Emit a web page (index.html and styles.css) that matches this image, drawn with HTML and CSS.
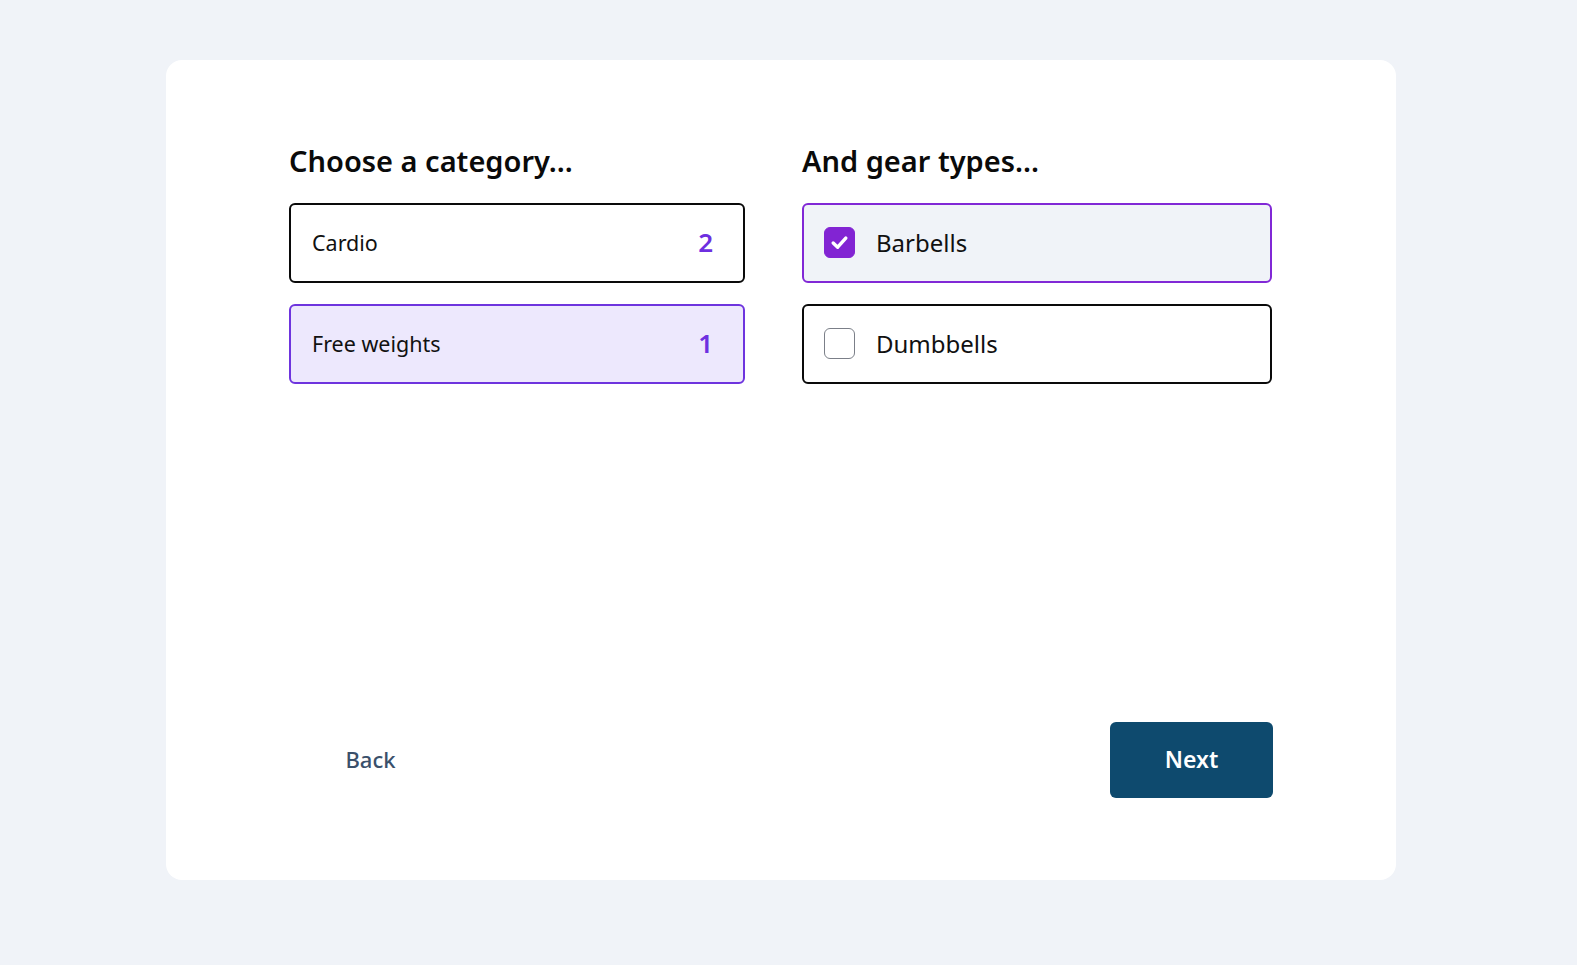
FILE: index.html
```html
<!DOCTYPE html>
<html lang="en">
<head>
<meta charset="utf-8">
<title>Choose gear</title>
<link rel="stylesheet" href="styles.css">
</head>
<body>
<main class="card">
  <div class="columns">
    <section class="col col-cat">
      <h2 class="heading">Choose a category...</h2>
      <ul class="list">
        <li class="cat">
          <span class="cat-name">Cardio</span>
          <span class="cat-count">2</span>
        </li>
        <li class="cat cat-active">
          <span class="cat-name">Free weights</span>
          <span class="cat-count">1</span>
        </li>
      </ul>
    </section>
    <section class="col col-gear">
      <h2 class="heading">And gear types...</h2>
      <ul class="list">
        <li class="gear gear-checked">
          <span class="box box-on">
            <svg viewBox="0 0 16 16" width="16" height="16"><polyline points="3.2,8.4 6.6,11.6 12.8,4.6" fill="none" stroke="#fff" stroke-width="2.6" stroke-linecap="round" stroke-linejoin="round"/></svg>
          </span>
          <span class="gear-name">Barbells</span>
        </li>
        <li class="gear">
          <span class="box"></span>
          <span class="gear-name">Dumbbells</span>
        </li>
      </ul>
    </section>
  </div>
  <div class="footer">
    <button class="btn btn-back" type="button">Back</button>
    <button class="btn btn-next" type="button">Next</button>
  </div>
</main>
</body>
</html>
```
FILE: styles.css
```css
* { box-sizing: border-box; }
html, body { margin: 0; }
body {
  background: #f0f3f8;
  font-family: "Noto Sans", "Open Sans", sans-serif;
  color: #111;
  padding: 60px 0 0 166px;
}
.card {
  width: 1230px;
  height: 820px;
  background: #fff;
  border-radius: 16px;
  padding: 84px 123px 82px;
  display: flex;
  flex-direction: column;
}
.columns {
  display: grid;
  grid-template-columns: 456px 470px;
  column-gap: 57px;
}
.heading {
  margin: 0 0 25px;
  font-size: 29px;
  line-height: 34px;
  font-weight: 600;
  color: #0a0a0a;
  letter-spacing: 0;
}
.list {
  list-style: none;
  margin: 0;
  padding: 0;
  display: flex;
  flex-direction: column;
  gap: 21px;
}
.cat {
  height: 80px;
  border: 2px solid #0a0a0a;
  border-radius: 6px;
  display: flex;
  align-items: center;
  justify-content: space-between;
  padding: 0 30px 2px 21px;
  font-size: 21.5px;
}
.cat-active {
  background: #ede8fd;
  border-color: #6e34de;
}
.cat-count {
  color: #6e2fe0;
  font-weight: 600;
  font-size: 26px;
}
.gear {
  height: 80px;
  border: 2px solid #0a0a0a;
  border-radius: 6px;
  display: flex;
  align-items: center;
  padding: 0 20px 2px;
  gap: 21px;
  font-size: 24px;
}
.gear-checked {
  background: #f0f3f8;
  border-color: #8128d6;
}
.box {
  width: 31px;
  height: 31px;
  border: 1.5px solid #7b7f88;
  border-radius: 6px;
  background: #fff;
  display: flex;
  align-items: center;
  justify-content: center;
  flex: none;
}
.box-on {
  background: #8224d3;
  border-color: #8224d3;
}
.box-on svg { width: 21px; height: 21px; }
.footer {
  margin-top: auto;
  display: flex;
  justify-content: space-between;
}
.btn {
  width: 163px;
  height: 76px;
  border: none;
  border-radius: 6px;
  font-family: inherit;
  font-size: 23px;
  font-weight: 600;
  cursor: pointer;
  padding: 0 0 2px;
}
.btn-back {
  background: transparent;
  color: #3a506b;
  font-weight: 500;
  font-size: 22px;
}
.btn-next {
  background: #0e4a6e;
  color: #fff;
}
```
